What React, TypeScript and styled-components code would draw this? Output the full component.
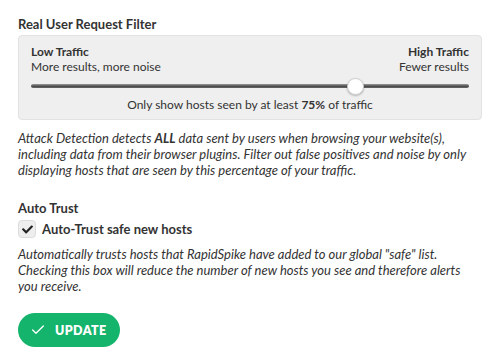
import React, { useState } from 'react'
import styled, { createGlobalStyle } from 'styled-components'
import { Check } from 'lucide-react'
import { FaCheck } from 'react-icons/fa'

const GlobalStyle = createGlobalStyle`
  body {
    margin: 0;
    background: #fff;
    font-family: Lato, "Open Sans", sans-serif;
    color: #333;
  }
`

const textColor = '#333'
const green = '#14b46c'

const Page = styled.div`
  padding: 16px 18px;
  width: 497px;
  box-sizing: border-box;
`

const Heading = styled.h3`
  margin: 0 0 3px;
  font-size: 13px;
  font-weight: 700;
  line-height: 16px;
  color: ${textColor};
`

const Panel = styled.div`
  background: #efefef;
  border: 1px solid #e2e2e2;
  border-radius: 4px;
  padding: 8px 12px 7px;
  width: 464px;
  box-sizing: border-box;
`

const Ends = styled.div`
  display: flex;
  justify-content: space-between;
`

const End = styled.div<{ $right?: boolean }>`
  text-align: ${(p) => (p.$right ? 'right' : 'left')};
  font-size: 12px;
  line-height: 15px;
  color: ${textColor};
  > strong {
    display: block;
    font-weight: 700;
  }
`

const Range = styled.input`
  -webkit-appearance: none;
  appearance: none;
  display: block;
  width: 100%;
  height: 18px;
  margin: 3px 0 2px;
  background: transparent;
  &::-webkit-slider-runnable-track {
    height: 4px;
    border-radius: 2px;
    background: linear-gradient(#9a9a9a, #4a4a4a 60%, #6a6a6a);
  }
  &::-webkit-slider-thumb {
    -webkit-appearance: none;
    width: 17px;
    height: 17px;
    margin-top: -6.5px;
    border-radius: 50%;
    background: #fff;
    border: 1px solid #cfcfcf;
    box-shadow: 0 1px 2px rgba(0, 0, 0, 0.25);
  }
`

const Caption = styled.div`
  text-align: center;
  font-size: 12px;
  line-height: 15px;
  color: ${textColor};
`

const Note = styled.p`
  margin: 10px 0 0;
  font-size: 13px;
  font-style: italic;
  line-height: 16px;
  color: ${textColor};
`

const TrustNote = styled(Note)`
  margin-top: 8px;
`

const SubHeading = styled(Heading)`
  margin: 22px 0 4px;
`

const CheckRow = styled.label`
  display: flex;
  align-items: center;
  gap: 6px;
  font-size: 13px;
  font-weight: 700;
  color: ${textColor};
  cursor: pointer;
`

const Box = styled.span`
  display: inline-flex;
  align-items: center;
  justify-content: center;
  width: 18px;
  height: 18px;
  box-sizing: border-box;
  border: 1px solid #dcdcdc;
  border-radius: 4px;
  background: #eeeeee;
  color: #222;
  font-size: 11px;
`

const HiddenInput = styled.input`
  display: none;
`

const UpdateButton = styled.button`
  margin-top: 19px;
  display: inline-flex;
  align-items: center;
  gap: 9px;
  height: 34px;
  padding: 0 13px 0 12px;
  border: none;
  border-radius: 17px;
  background: ${green};
  color: #fff;
  font-family: Lato, sans-serif;
  font-size: 12.5px;
  font-weight: 800;
  letter-spacing: 0.03em;
  cursor: pointer;
`

export default function App() {
  const [level, setLevel] = useState(75)
  const [trust, setTrust] = useState(true)

  return (
    <>
      <GlobalStyle />
      <Page>
        <Heading>Real User Request Filter</Heading>
        <Panel>
          <Ends>
            <End>
              <strong>Low Traffic</strong>
              More results, more noise
            </End>
            <End $right>
              <strong>High Traffic</strong>
              Fewer results
            </End>
          </Ends>
          <Range
            type="range"
            min={0}
            max={100}
            value={level}
            onChange={(e) => setLevel(Number(e.target.value))}
          />
          <Caption>
            Only show hosts seen by at least <strong>{level}%</strong> of traffic
          </Caption>
        </Panel>
        <Note>
          Attack Detection detects <strong>ALL</strong> data sent by users when browsing your
          website(s), including data from their browser plugins. Filter out false positives and
          noise by only displaying hosts that are seen by this percentage of your traffic.
        </Note>

        <SubHeading>Auto Trust</SubHeading>
        <CheckRow>
          <HiddenInput type="checkbox" checked={trust} onChange={() => setTrust(!trust)} />
          <Box>{trust && <FaCheck />}</Box>
          Auto-Trust safe new hosts
        </CheckRow>
        <TrustNote>
          Automatically trusts hosts that RapidSpike have added to our global "safe" list.
          Checking this box will reduce the number of new hosts you see and therefore alerts
          you receive.
        </TrustNote>

        <UpdateButton>
          <Check size={16} strokeWidth={2} />
          UPDATE
        </UpdateButton>
      </Page>
    </>
  )
}
